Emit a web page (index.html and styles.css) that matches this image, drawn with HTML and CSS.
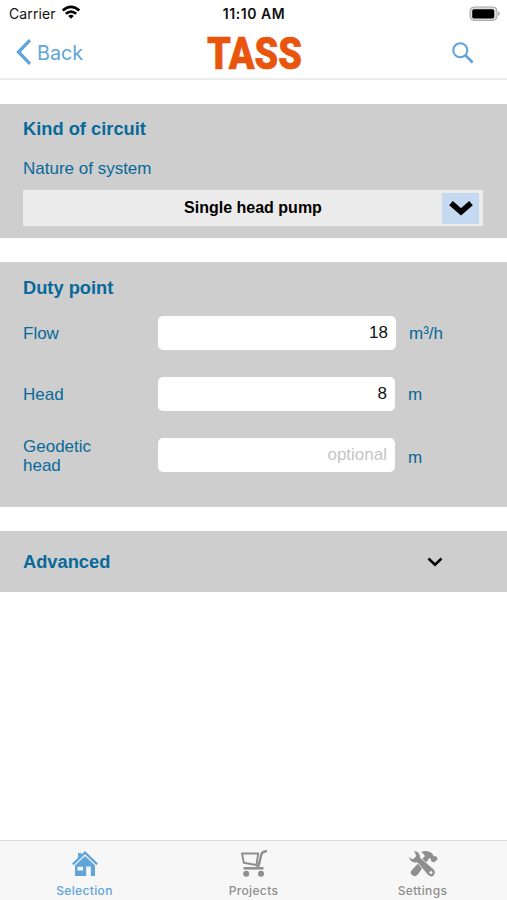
FILE: index.html
```html
<!DOCTYPE html>
<html lang="en">
<head>
<meta charset="utf-8">
<title>Selection</title>
<link rel="stylesheet" href="styles.css">
</head>
<body>
<div class="screen">
  <header class="header">
    <div class="status">
      <div class="carrier"><span class="carrier-name">Carrier</span>
        <svg class="wifi" viewBox="0 0 20 15" width="20" height="15" fill="none" stroke="#000" stroke-width="2.7"><path d="M1.7 5.5Q10-1.9 18.3 5.5"/><path d="M4.8 8.8Q10 4.4 15.2 8.8"/><path d="M7.2 10.9Q10 8.4 12.8 10.9L10 13.8z" fill="#000" stroke="none"/></svg>
      </div>
      <div class="time">11:10 AM</div>
      <svg class="battery" viewBox="0 0 32 16" width="32" height="16"><rect x="1" y="1" width="27" height="13.4" rx="4" fill="#ddd" stroke="#a5a5a5"/><path d="M29.3 5.5q3 2.2 0 4.4z" fill="#999"/><rect x="3.2" y="3.2" width="22" height="9.2" rx="1.7"/></svg>
    </div>
    <nav class="nav">
      <div class="back"><svg viewBox="0 0 18 28" width="18" height="28"><path d="M15 2.2 3.5 14 15 25.8" fill="none" stroke="#61a4d9" stroke-width="3.3"/></svg><span class="back-label">Back</span></div>
      <svg class="logo" viewBox="0 0 110 64" width="110" height="64"><text x="9" y="48.2" textLength="95" lengthAdjust="spacingAndGlyphs">TASS</text></svg>
      <svg class="search" viewBox="0 0 24 24" width="24" height="24" fill="none" stroke="#61a4d9"><circle cx="9.3" cy="9.2" r="7" stroke-width="2.1"/><path d="m14.4 14.2 7.2 7.3" stroke-width="2.7"/></svg>
    </nav>
  </header>
  <main>
    <section class="panel circuit">
      <h2 class="title circuit-title">Kind of circuit</h2>
      <div class="label nature">Nature of system</div>
      <div class="select"><span class="select-text">Single head pump</span><span class="select-arrow"><svg viewBox="0 0 24 18" width="24" height="18"><path d="m2 4.2 10 8.6 10-8.6" fill="none" stroke="#000" stroke-width="5.6"/></svg></span></div>
    </section>
    <section class="panel duty">
      <h2 class="title duty-title">Duty point</h2>
      <div class="row"><div class="label">Flow</div><div class="field wide">18</div><div class="unit cubic">m³/h</div></div>
      <div class="row"><div class="label">Head</div><div class="field">8</div><div class="unit">m</div></div>
      <div class="row"><div class="label two-line">Geodetic<br>head</div><div class="field empty">optional</div><div class="unit last">m</div></div>
    </section>
    <section class="panel advanced">
      <h2 class="title advanced-title">Advanced</h2>
      <svg viewBox="0 0 16 12" width="16" height="12"><path d="m1.5 2.5 6.5 6.2 6.5-6.2" fill="none" stroke="#000" stroke-width="2.5"/></svg>
    </section>
  </main>
  <footer class="tabs">
    <div class="tab active">
      <svg viewBox="0 0 28 28" width="28" height="28" fill="#61a4d9"><path d="M14 1 27 13.6l-1.6 1.7L14 4.3 2.6 15.3 1 13.6 7 7.7V3h3.5v1.5z"/><path fill-rule="evenodd" d="M14 6 24 15.5V26h-4.2V16.5h-4.6V26H4V15.5zM6.5 16.8v3.7h5.5v-3.7z"/></svg>
      <span>Selection</span>
    </div>
    <div class="tab">
      <svg viewBox="0 0 28 28" width="28" height="28" fill="none" stroke="#8e8e8e" stroke-width="1.9"><path d="M2 3.5h16.2L16.5 15 3.8 12.8z" stroke-linejoin="round"/><path d="M27 1.3Q21.6 1 20.8 6.5L19.1 14Q18.7 16.2 17 17.5" stroke-width="2.4"/><path d="M3.5 18.3H23.5" stroke-width="2.5"/><g fill="#8e8e8e" stroke="none"><circle cx="6.2" cy="23.8" r="3"/><circle cx="21" cy="23.8" r="3"/></g></svg>
      <span>Projects</span>
    </div>
    <div class="tab">
      <svg class="tools" viewBox="0 0 30 28" width="30" height="28"><path d="M13 2.1Q19-.4 24 3.2l2 3.3 2-.6 1.8 3.4-4 3.2-2.9-1.5.2-2-1.8-1L9.8 24.5Q7 27.5 4 25T4.5 19.5L17 6Q15 3.3 13 2.1z" fill="#8e8e8e"/><path d="M5.5.5Q12.5 1 12.6 8L26 19.2Q28.6 22.2 26.2 25.3T20 25.2L9.6 12.9Q2.5 14 .3 6.8L5 9 8 6z" fill="#8e8e8e" stroke="#f7f7f7" stroke-width=".8"/><circle cx="23" cy="22.5" r="1.5" fill="#f7f7f7"/></svg>
      <span>Settings</span>
    </div>
  </footer>
</div>
</body>
</html>
```
FILE: styles.css
```css
* { box-sizing: border-box; }
body { margin: 0; background: #fff; font-family: "Liberation Sans", sans-serif; }
svg { display: block; flex: none; }
.screen { width: 507px; height: 900px; display: flex; flex-direction: column; overflow: hidden; }
.header { height: 80px; border-bottom: 2px solid #ededed; }
.status { height: 28px; display: grid; grid-template-columns: 1fr 80px 1fr; align-items: center; padding: 0 6px 0 9px; font-family: Inter, sans-serif; color: #111; }
.carrier { display: flex; align-items: center; gap: 5px; font-size: 14px; letter-spacing: .1px; }
.carrier-name { margin-top: -2px; }
.wifi { margin-top: -3px; }
.time { font-size: 14px; font-weight: 600; letter-spacing: .55px; text-align: center; white-space: nowrap; margin-left: -2px; margin-top: -1px; }
.battery { justify-self: end; margin-top: -1px; }
.nav { height: 50px; display: grid; grid-template-columns: 1fr 110px 1fr; grid-template-rows: 50px; align-items: center; padding: 0 32px 0 15px; }
.back { display: flex; align-items: center; gap: 4px; color: #61a4d9; font-family: Inter, sans-serif; font-size: 19.8px; }
.back svg { margin-top: -2px; }
.back-label { margin-top: -1px; }
.logo { margin-left: 8px; }
.logo text { font: 900 45px Roboto, sans-serif; fill: #e9550d; stroke: #e9550d; stroke-width: .6px; }
.search { justify-self: end; margin-top: -1px; }
.panel { background: #cecece; color: #08699a; }
.title { margin: 0; font-size: 18.3px; line-height: 22px; font-weight: 700; white-space: nowrap; }
.circuit { margin-top: 24px; height: 134px; padding: 14px 24px 0 23px; }
.label, .unit { font-size: 17px; line-height: 19.5px; }
.select { height: 36px; margin-top: 11px; background: #ebebeb; position: relative; display: flex; align-items: center; justify-content: center; color: #000; font-size: 16px; font-weight: 700; }
.select-arrow { position: absolute; right: 4px; top: 3px; width: 37px; height: 31px; background: #c5daf0; display: flex; align-items: center; justify-content: center; }
.duty { margin-top: 24px; height: 245px; padding: 15px 24px 0 23px; }
.duty-title { margin-bottom: 17px; }
.row { height: 34px; margin-bottom: 27px; display: grid; grid-template-columns: 135px 238px 1fr; grid-template-rows: 34px; align-items: center; }
.label { padding-top: 2px; }
.label.two-line { padding-top: 2px; }
.label.nature { margin-top: 18px; padding-top: 1px; }
.field { height: 34px; width: 237px; border-radius: 5px; background: #fff; color: #111; padding: 0 8px; text-align: right; font-size: 17px; line-height: 33px; }
.field.wide { width: 238px; }
.empty { color: #c5c5c5; }
.unit { padding: 2px 0 0 12px; }
.unit.cubic { padding-left: 13px; }
.unit.last { padding-top: 5px; }
.advanced { margin-top: 24px; height: 61px; padding: 0 64px 0 23px; display: flex; align-items: center; justify-content: space-between; }
.tabs { margin-top: auto; height: 60px; border-top: 1px solid #dcdcdc; background: #f7f7f7; display: grid; grid-template-columns: repeat(3, 1fr); }
.tab { display: flex; flex-direction: column; align-items: center; padding-top: 9px; color: #8e8e8e; font: 500 12px/16px Inter, sans-serif; letter-spacing: .35px; }
.tab span { margin-top: 5px; }
.tab.active { color: #61a4d9; }
```
